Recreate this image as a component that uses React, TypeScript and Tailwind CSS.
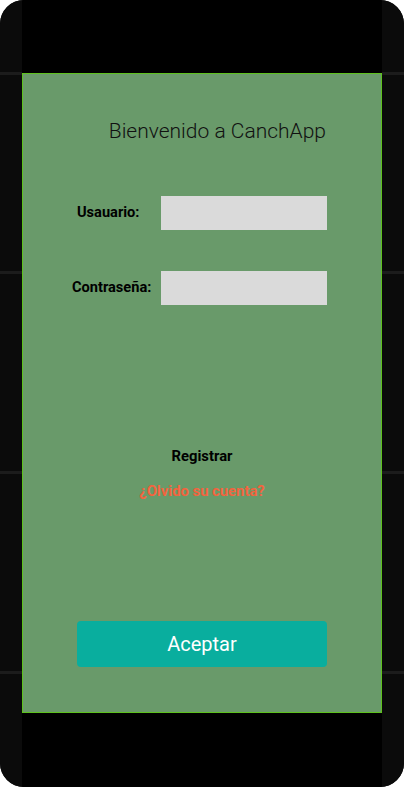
import React from "react";

function Strip() {
  return (
    <div className="flex flex-col w-[22px] bg-[#0b0b0b]">
      <div className="h-[72px]" />
      <div className="h-[3px] bg-[#1c1c1c]" />
      <div className="h-[196px]" />
      <div className="h-[3px] bg-[#1c1c1c]" />
      <div className="h-[197px]" />
      <div className="h-[3px] bg-[#1c1c1c]" />
      <div className="h-[197px]" />
      <div className="h-[3px] bg-[#1c1c1c]" />
      <div className="flex-1" />
    </div>
  );
}

export default function App() {
  return (
    <div className="w-[404px] h-[787px] bg-white" style={{ fontFamily: "Roboto, 'Liberation Sans', sans-serif" }}>
      <div className="w-[404px] h-[787px] rounded-[24px] overflow-hidden flex bg-black">
        <Strip />
        <div className="w-[360px] flex flex-col bg-black">
          <div className="h-[73px]" />
          <div className="h-[640px] border border-[#5ec21e] bg-[#699a6a] flex flex-col">
            <div className="mt-[43px] flex justify-end pr-[55px]">
              <span className="text-[21px] leading-[28px] font-light text-[#111]">Bienvenido a CanchApp</span>
            </div>
            <div className="mt-[51px] flex items-center h-[34px]">
              <span className="ml-[54px] text-[14.6px] font-bold text-black">Usauario:</span>
              <div className="ml-auto mr-[54px] w-[166px] h-[34px] bg-[#dadada]" />
            </div>
            <div className="mt-[41px] flex items-center h-[34px]">
              <span className="ml-[49px] text-[14.6px] font-bold text-black">Contraseña:</span>
              <div className="ml-auto mr-[54px] w-[166px] h-[34px] bg-[#dadada]" />
            </div>
            <div className="mt-[141px] text-center text-[14.8px] leading-[20px] font-bold text-black">Registrar</div>
            <div className="mt-[15px] text-center text-[14.8px] leading-[20px] font-bold text-[#f2643e]">¿Olvido su cuenta?</div>
            <div className="mt-[120px] ml-[54px] w-[250px] h-[46px] rounded-[4px] bg-[#09ae9e] flex items-center justify-center">
              <span className="text-white text-[20px]">Aceptar</span>
            </div>
          </div>
          <div className="flex-1" />
        </div>
        <Strip />
      </div>
    </div>
  );
}
